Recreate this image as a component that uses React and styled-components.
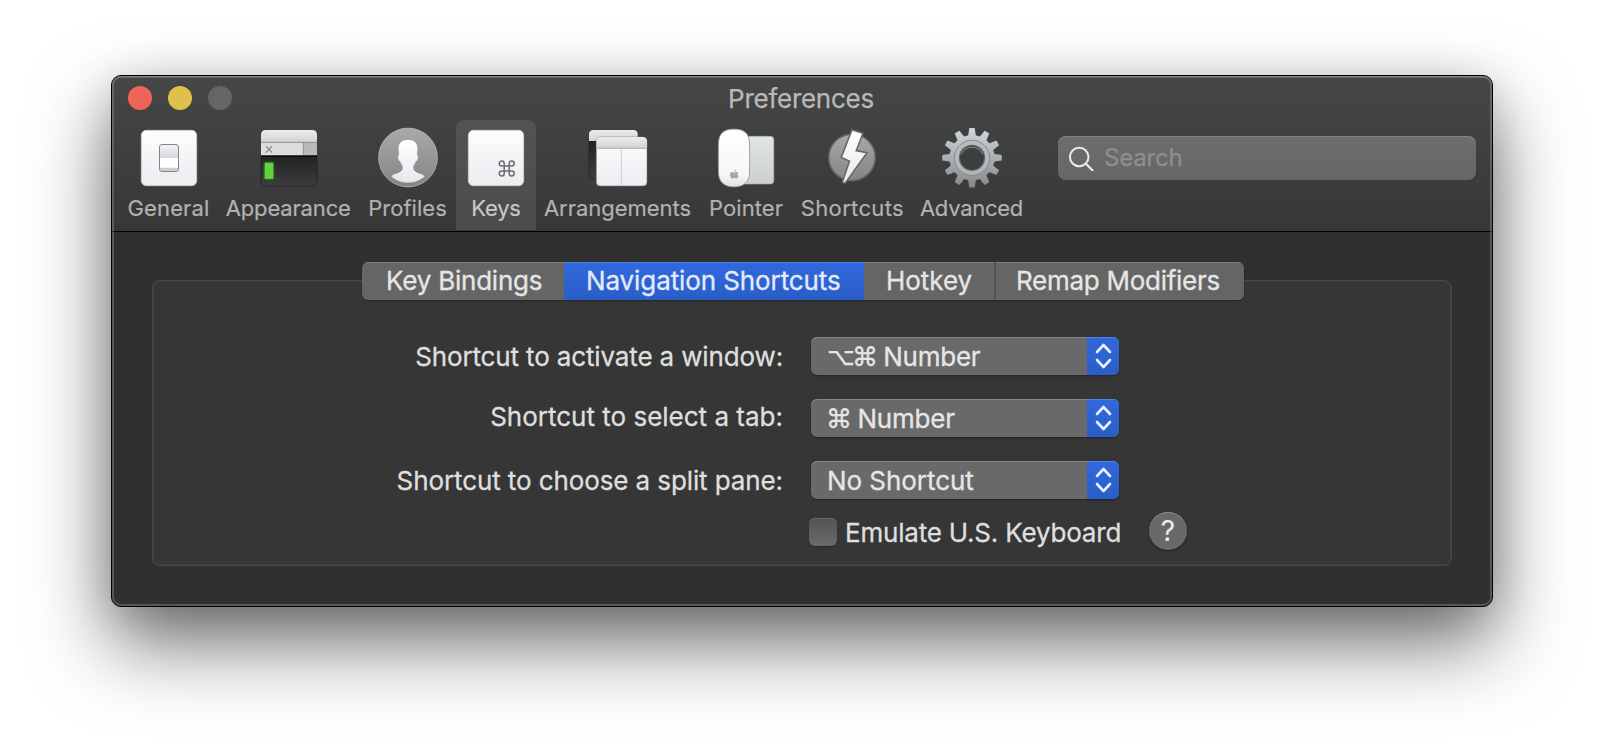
import React from 'react';
import styled, { createGlobalStyle, css } from 'styled-components';

const GlobalStyle = createGlobalStyle`
  *, *::before, *::after { box-sizing: border-box; }
  body {
    margin: 0;
    background: #fff;
    font-family: Inter, "DejaVu Sans", sans-serif;
    overflow: hidden;
  }
`;

const Desktop = styled.div`
  width: 1604px;
  height: 754px;
  padding: 75px 111px 0;
`;

const Window = styled.div`
  position: relative;
  width: 1382px;
  height: 532px;
  border: 1px solid #000;
  border-radius: 10px;
  background: #303030;
  box-shadow: 0 36px 80px rgba(0, 0, 0, 0.57), 0 8px 44px rgba(0, 0, 0, 0.14);

  &::after {
    content: '';
    position: absolute;
    inset: 0;
    border-radius: 9px;
    box-shadow: inset 0 1px 0 rgba(255, 255, 255, 0.16), inset 0 0 0 2px rgba(255, 255, 255, 0.19);
    pointer-events: none;
  }
`;

const Header = styled.header`
  height: 156px;
  border-bottom: 1px solid #000;
  border-radius: 9px 9px 0 0;
  background: linear-gradient(#454746, #363736);
`;

const TitleBar = styled.div`
  display: grid;
  grid-template-columns: 1fr auto 1fr;
  align-items: center;
  height: 44px;
  padding: 0 16px;
`;

const Lights = styled.div`
  display: flex;
  gap: 16px;
`;

const Light = styled.span`
  width: 24px;
  height: 24px;
  border-radius: 50%;
  background: ${(p) => p.$color};
`;

const Title = styled.h1`
  margin: 1px 2px 0 0;
  font-size: 26px;
  line-height: 32px;
  font-weight: 400;
  letter-spacing: -0.27px;
  color: #b8b9b8;
  -webkit-text-stroke: 0.25px #b8b9b8;
`;

const Toolbar = styled.nav`
  display: flex;
  padding-left: 9px;
`;

const ToolItem = styled.button`
  display: flex;
  flex-direction: column;
  align-items: center;
  width: ${(p) => p.$width}px;
  height: 110px;
  padding: 6px 0 0;
  border: 0;
  border-radius: 8px 8px 0 0;
  background: ${(p) => (p.$active ? 'linear-gradient(#525352, #4a4b4a)' : 'none')};
  color: ${(p) => (p.$active ? '#c8c8c8' : '#b1b2b1')};
  font: 400 22px/26px Inter, sans-serif;
  -webkit-text-stroke: 0.2px currentColor;
  letter-spacing: ${(p) => p.$tracking}px;
  white-space: nowrap;
`;

const ToolLabel = styled.span`
  margin-right: ${(p) => p.$shift || 0}px;
`;

const ToolIcon = styled.svg`
  display: block;
  flex: none;
  width: 64px;
  height: 64px;
  margin-bottom: 5px;
`;

const SearchField = styled.div`
  display: flex;
  align-items: center;
  gap: 10px;
  width: 418px;
  height: 44px;
  margin: 16px 0 0 26px;
  padding: 0 10px;
  border-radius: 8px;
  background: linear-gradient(#6c6e6d, #656766);
  box-shadow: inset 0 1px 0 #808281;
`;

const SearchIcon = styled.svg`
  width: 26px;
  height: 26px;
`;

const Placeholder = styled.span`
  font-size: 24px;
  line-height: 28px;
  letter-spacing: -0.2px;
  color: #8d8e8e;
  -webkit-text-stroke: 0.25px #8d8e8e;
`;

const Content = styled.main`
  padding: 48px 40px 0;
`;

const GroupBox = styled.section`
  display: flex;
  flex-direction: column;
  height: 286px;
  border: 1px solid #494949;
  border-radius: 8px;
  background: #363636;
  box-shadow: inset 0 0 0 1px #3d3d3d;
`;

const Segmented = styled.div`
  display: flex;
  align-self: flex-start;
  height: 38px;
  margin: -19px 0 0 209px;
  border-radius: 6px;
  overflow: hidden;
  box-shadow: 0 1px 2px rgba(0, 0, 0, 0.35);
`;

const blueFill = css`
  background: linear-gradient(#3069de, #2a5dc6);
  box-shadow: inset 0 1px 0 #5182e4;
`;

const bodyText = css`
  font-size: 26px;
  -webkit-text-stroke: 0.3px currentColor;
  letter-spacing: ${(p) => p.$tracking || 0}px;
  white-space: nowrap;
`;

const Segment = styled.button`
  width: ${(p) => p.$width}px;
  padding: 0 0 0 ${(p) => p.$inset}px;
  border: 0;
  border-left: ${(p) => (p.$divided ? '2px solid #535353' : '0')};
  background: #656565;
  box-shadow: inset 0 1px 0 #818181;
  color: #e6e6e6;
  font: 400 26px/38px Inter, sans-serif;
  text-align: left;
  ${bodyText}
  ${(p) => p.$active && blueFill}
  ${(p) => p.$active && 'color: #e3eafb;'}
`;

const Form = styled.div`
  display: grid;
  grid-template-columns: 630px 308px;
  grid-auto-rows: 38px;
  gap: 24px 28px;
  margin-top: 37px;
`;

const Label = styled.label`
  text-align: right;
  line-height: ${(p) => (p.$raised ? 36 : 40)}px;
  color: #dfdfdf;
  ${bodyText}
`;

const PopUp = styled.div`
  display: flex;
  justify-content: space-between;
  border-radius: 6px;
  overflow: hidden;
  background: #696969;
  box-shadow: inset 0 1px 0 #868686, 0 1px 2px rgba(0, 0, 0, 0.35);
`;

const PopUpValue = styled.span`
  padding-left: 16px;
  line-height: 40px;
  color: #e6e6e6;
  ${bodyText}
`;

const OptionKey = styled.span`
  position: relative;
  top: -1px;
  font: 24px/1 "DejaVu Sans", sans-serif;
`;

const CommandKey = styled.span`
  margin: 0 -1.5px 0 ${(p) => (p.$joined ? -2.5 : -1)}px;
  font: 26px/1 "DejaVu Sans", sans-serif;
`;

const Stepper = styled.svg`
  width: 32px;
  height: 38px;
  ${blueFill}
`;

const CheckRow = styled.div`
  display: flex;
  align-items: center;
  height: 38px;
  margin: 13px 0 0 656px;
`;

const CheckBox = styled.span`
  width: 28px;
  height: 28px;
  margin-top: 2px;
  border-radius: 6px;
  background: linear-gradient(#545454, #6a6a6a);
  box-shadow: inset 0 1px 0 #6a6a6a, 0 1px 1px rgba(0, 0, 0, 0.3);
`;

const CheckLabel = styled.span`
  width: 312px;
  padding: 3px 0 0 8px;
  line-height: 34px;
  color: #dfdfdf;
  ${bodyText}
`;

const HelpButton = styled.button`
  width: 38px;
  height: 38px;
  padding: 0;
  border: 0;
  border-radius: 50%;
  background: #696969;
  box-shadow: inset 0 1px 0 #868686, 0 1px 2px rgba(0, 0, 0, 0.4);
  color: #ececec;
  font: 400 28px/38px Inter, sans-serif;
`;

const COMMAND_PATH = 'M6 6h5v5H6zM6 6H3.5A2.5 2.5 0 1 1 6 3.5zM11 6V3.5A2.5 2.5 0 1 1 13.5 6zM11 11h2.5A2.5 2.5 0 1 1 11 13.5zM6 11v2.5A2.5 2.5 0 1 1 3.5 11z';

const GeneralIcon = () => (
  <ToolIcon viewBox="0 0 64 64">
    <defs>
      <linearGradient id="plate" x2="0" y2="1"><stop stopColor="#fdfdfe" /><stop offset="1" stopColor="#ececf1" /></linearGradient>
      <linearGradient id="rocker" x2="0" y2="1"><stop stopColor="#f2f3f6" /><stop offset="1" stopColor="#d6d8dd" /></linearGradient>
    </defs>
    <rect x="4.3" y="4.3" width="55.4" height="55.4" rx="5" fill="url(#plate)" stroke="#cfcfd0" strokeWidth="0.7" />
    <rect x="22.5" y="18.5" width="19" height="27" rx="2.5" fill="#fff" />
    <path d="M23 21q0-2 2-2h14q2 0 2 2v11H23z" fill="url(#rocker)" />
    <path d="M23 41.7h18V43q0 2-2 2H25q-2 0-2-2z" fill="#cdcecd" />
    <rect x="22.5" y="18.5" width="19" height="27" rx="2.5" fill="none" stroke="#858589" />
  </ToolIcon>
);

const AppearanceIcon = () => (
  <ToolIcon viewBox="0 0 64 64">
    <defs>
      <linearGradient id="bar" x2="0" y2="1"><stop stopColor="#ededed" /><stop offset="1" stopColor="#d2d2d2" /></linearGradient>
      <linearGradient id="screen" x2="0" y2="1"><stop stopColor="#222" /><stop offset="1" stopColor="#3d3d3d" /></linearGradient>
      <filter id="glow" x="-60%" y="-40%" width="220%" height="180%"><feGaussianBlur stdDeviation="1.3" /></filter>
    </defs>
    <path d="M4 30h56v25q0 5-5 5H9q-5 0-5-5z" fill="url(#screen)" stroke="#1d1d1d" strokeWidth="0.7" />
    <path d="M4 16V9q0-5 5-5h46q5 0 5 5v7z" fill="url(#bar)" />
    <rect x="4" y="16" width="56" height="14" fill="#dcdddf" />
    <rect x="46.5" y="16" width="13.5" height="14" fill="#b9babc" />
    <path d="M4 16.4h56M46.3 16v13" stroke="#88898a" strokeWidth="0.9" />
    <path d="M8.8 20.2l6.4 6.4M15.2 20.2l-6.4 6.4" stroke="#808183" strokeWidth="1.1" />
    <rect x="4" y="29.3" width="56" height="1.4" fill="#000" />
    <rect x="7.5" y="36.5" width="9" height="16.5" fill="#3fae26" filter="url(#glow)" />
    <rect x="7.8" y="36.8" width="8.4" height="16" fill="#62d33e" />
  </ToolIcon>
);

const ProfilesIcon = () => (
  <ToolIcon viewBox="0.5 0 64 64">
    <defs>
      <linearGradient id="disc" x2="0" y2="1"><stop stopColor="#a9a9a9" /><stop offset="1" stopColor="#848484" /></linearGradient>
      <linearGradient id="bust" x2="0" y2="1"><stop stopColor="#fff" /><stop offset="1" stopColor="#e6e8ec" /></linearGradient>
    </defs>
    <circle cx="31.5" cy="31.5" r="29.4" fill="url(#disc)" stroke="#b4b4b4" strokeWidth="0.8" />
    <path
      d="M31.5 13.5c-6.2 0-9.8 3.400-9.800 9 0 2 .3 4.600.5 6.600-1.200 0-1.300 1.200-.9 3 .4 2 1.200 3.400 2.300 3.400.4 1.900 1.200 3.300 2.200 4.400v2.800c0 2-2.600 3.400-6 4.600-2.400.8-4 1.700-5.400 3 4.600 4.300 10.500 6.700 17.100 6.700s12.500-2.400 17.100-6.700c-1.400-1.300-3-2.200-5.400-3-3.400-1.200-6-2.600-6-4.600v-2.800c1-1.100 1.800-2.500 2.200-4.400 1.100 0 1.900-1.400 2.300-3.400.4-1.800.3-3-.9-3 .2-2 .5-4.600.5-6.600 0-5.600-3.600-9-9.800-9z"
      fill="url(#bust)" stroke="#7f7f7f" strokeWidth="0.5"
    />
  </ToolIcon>
);

const KeysIcon = () => (
  <ToolIcon viewBox="0 0 64 64">
    <rect x="4.3" y="4.3" width="55.4" height="55.4" rx="5" fill="url(#plate)" stroke="#cfcfd0" strokeWidth="0.7" />
    <path transform="translate(34.2 34)" d={COMMAND_PATH} fill="none" stroke="#6c6c6f" strokeWidth="1.5" />
  </ToolIcon>
);

const ArrangementsIcon = () => (
  <ToolIcon viewBox="0 0 64 64">
    <path d="M3 15h48v37.700H8q-5 0-5-4.500z" fill="url(#screen)" stroke="#1b1b1b" strokeWidth="0.6" />
    <path d="M3 15V8.500Q3 4 7.500 4h40Q51.700 4 51.700 8.500V15z" fill="url(#bar)" />
    <path d="M10.300 22V15.500q0-4.500 4.500-4.500h41.700q4.500 0 4.500 4.500v40.500q0 4-4 4H14q-3.700 0-3.700-4z" fill="url(#plate)" stroke="#77787a" strokeWidth="0.6" />
    <path d="M10.600 22V15.500q0-4.200 4.200-4.200h41.700q4.200 0 4.200 4.200V22z" fill="url(#bar)" />
    <path d="M10.500 22.300h50.300" stroke="#9fa0a1" strokeWidth="0.9" />
    <path d="M35.400 22.600V59.500" stroke="#cbcbd0" strokeWidth="0.9" />
  </ToolIcon>
);

const PointerIcon = () => (
  <ToolIcon viewBox="0 0 64 64">
    <defs>
      <linearGradient id="pad" x2="0" y2="1"><stop stopColor="#e2e5e6" /><stop offset="1" stopColor="#cbcfce" /></linearGradient>
      <linearGradient id="mouse" x2="0" y2="1"><stop stopColor="#fff" /><stop offset="0.8" stopColor="#f6f6f8" /><stop offset="1" stopColor="#e2e2e5" /></linearGradient>
    </defs>
    <rect x="22" y="10.3" width="37.8" height="47.7" rx="3.5" fill="url(#pad)" stroke="#a9acab" strokeWidth="0.6" />
    <path d="M20 3.100c9.500 0 15.200 3.800 15.500 14 .2 9 .2 21 0 30-.3 9.500-6.500 13.800-15.500 13.800S4.800 56.600 4.500 47.100c-.2-9-.2-21 0-30C4.800 6.900 10.500 3.100 20 3.100z" fill="url(#mouse)" stroke="#969799" strokeWidth="0.9" />
    <path d="M22.600 46.100c-.9 0-1.500.6-2.200.6s-1.400-.6-2.300-.6c-1.500 0-2.200 1.300-2.200 2.600 0 1.700 1.200 3.800 2.300 3.800.8 0 1.300-.5 2.200-.5s1.300.5 2.100.5c.9 0 1.800-1.600 2.100-2.500-1.400-.6-1.500-2.500-.2-3.200-.4-.5-1-.7-1.800-.7zM20.300 45.700c0-1.200.8-2.100 1.900-2.300.1 1.200-.8 2.200-1.900 2.300z" fill="#a7a7aa" />
  </ToolIcon>
);

const ShortcutsIcon = () => (
  <ToolIcon viewBox="0 0 64 64">
    <circle cx="32" cy="31.4" r="23.2" fill="url(#disc)" stroke="#666" strokeWidth="1.6" />
    <path d="M32 3.800L43 7.300 36.200 24.600 47 26.700 25 57.400 22.300 56.300 29.500 35.100 21.300 31.400z" fill="url(#bust)" stroke="#646464" strokeWidth="1.5" />
  </ToolIcon>
);

const TEETH = Array.from({ length: 12 }, (_, i) => i * 30);

const AdvancedIcon = () => (
  <ToolIcon viewBox="0 0 64 64">
    <defs>
      <linearGradient id="steel" gradientUnits="userSpaceOnUse" x1="0" y1="2" x2="0" y2="62"><stop stopColor="#ced6d9" /><stop offset="1" stopColor="#85888b" /></linearGradient>
      <linearGradient id="ring" x2="0" y2="1"><stop stopColor="#b4bdc1" /><stop offset="1" stopColor="#b2b6b8" /></linearGradient>
      <mask id="gearShape" maskUnits="userSpaceOnUse" x="0" y="0" width="64" height="64">
        <circle cx="32" cy="31.8" r="22.7" fill="#fff" />
        {TEETH.map((angle) => (
          <path key={angle} d="M27.800 12L29.300 2H34.700L36.200 12z" fill="#fff" transform={`rotate(${angle} 32 31.8)`} />
        ))}
        <circle cx="32" cy="31.8" r="12.3" fill="#000" />
      </mask>
    </defs>
    <rect width="64" height="64" fill="url(#steel)" mask="url(#gearShape)" />
    <circle cx="32" cy="31.8" r="15" fill="none" stroke="url(#ring)" strokeWidth="5" />
    <circle cx="32" cy="31.8" r="17.6" fill="none" stroke="#7d8588" strokeWidth="0.9" />
    <circle cx="32" cy="31.8" r="12.5" fill="none" stroke="#5c6265" strokeWidth="1.3" />
    <path d="M21.500 28A11.600 11.600 0 0 1 42.500 28" fill="none" stroke="#8b9295" strokeWidth="0.9" />
  </ToolIcon>
);

const TOOLS = [
  { name: 'General', width: 96, tracking: 0.12, shift: 1, Icon: GeneralIcon },
  { name: 'Appearance', width: 144, tracking: -0.16, shift: 1.5, Icon: AppearanceIcon },
  { name: 'Profiles', width: 95, tracking: 0.03, shift: 2, Icon: ProfilesIcon },
  { name: 'Keys', width: 80, tracking: -0.25, Icon: KeysIcon, active: true },
  { name: 'Arrangements', width: 164, tracking: -0.03, shift: 1, Icon: ArrangementsIcon },
  { name: 'Pointer', width: 92, tracking: 0.1, Icon: PointerIcon },
  { name: 'Shortcuts', width: 120, tracking: 0.34, shift: -0.8, Icon: ShortcutsIcon },
  { name: 'Advanced', width: 120, tracking: -0.27, shift: 1, Icon: AdvancedIcon },
];

const TABS = [
  { name: 'Key Bindings', width: 202, inset: 24, tracking: -0.22 },
  { name: 'Navigation Shortcuts', width: 300, inset: 22, tracking: -0.1, active: true },
  { name: 'Hotkey', width: 130, inset: 22, tracking: -0.05 },
  { name: 'Remap Modifiers', width: 250, inset: 20, tracking: -0.27, divided: true },
];

const PopUpButton = ({ children, tracking }) => (
  <PopUp>
    <PopUpValue $tracking={tracking}>{children}</PopUpValue>
    <Stepper viewBox="0 0 32 38">
      <path d="M10 15l6.500-7 6.500 7M10 23l6.500 7 6.500-7" fill="none" stroke="#e9effc" strokeWidth="2.6" strokeLinecap="round" strokeLinejoin="round" />
    </Stepper>
  </PopUp>
);

export default function App() {
  return (
    <Desktop>
      <GlobalStyle />
      <Window>
        <Header>
          <TitleBar>
            <Lights>
              <Light $color="#ed6559" />
              <Light $color="#e0c04c" />
              <Light $color="#656766" />
            </Lights>
            <Title>Preferences</Title>
          </TitleBar>
          <Toolbar>
            {TOOLS.map(({ name, width, tracking, shift, Icon, active }) => (
              <ToolItem key={name} $width={width} $tracking={tracking} $active={active}>
                <Icon />
                <ToolLabel $shift={shift}>{name}</ToolLabel>
              </ToolItem>
            ))}
            <SearchField>
              <SearchIcon viewBox="0 0 26 26">
                <circle cx="11.2" cy="12" r="9.3" fill="none" stroke="#ebebeb" strokeWidth="2" />
                <path d="M17.900 18.700l7.300 7.300" stroke="#ebebeb" strokeWidth="2.2" />
              </SearchIcon>
              <Placeholder>Search</Placeholder>
            </SearchField>
          </Toolbar>
        </Header>
        <Content>
          <GroupBox>
            <Segmented>
              {TABS.map((t) => (
                <Segment key={t.name} $width={t.width} $inset={t.inset} $tracking={t.tracking} $active={t.active} $divided={t.divided}>
                  {t.name}
                </Segment>
              ))}
            </Segmented>
            <Form>
              <Label $tracking={-0.14}>Shortcut to activate a window:</Label>
              <PopUpButton tracking={-0.25}><OptionKey>⌥</OptionKey><CommandKey $joined>⌘</CommandKey> Number</PopUpButton>
              <Label $raised>Shortcut to select a tab:</Label>
              <PopUpButton tracking={-0.2}><CommandKey>⌘</CommandKey> Number</PopUpButton>
              <Label $tracking={-0.1}>Shortcut to choose a split pane:</Label>
              <PopUpButton tracking={-0.05}>No Shortcut</PopUpButton>
            </Form>
            <CheckRow>
              <CheckBox />
              <CheckLabel $tracking={-0.2}>Emulate U.S. Keyboard</CheckLabel>
              <HelpButton>?</HelpButton>
            </CheckRow>
          </GroupBox>
        </Content>
      </Window>
    </Desktop>
  );
}
